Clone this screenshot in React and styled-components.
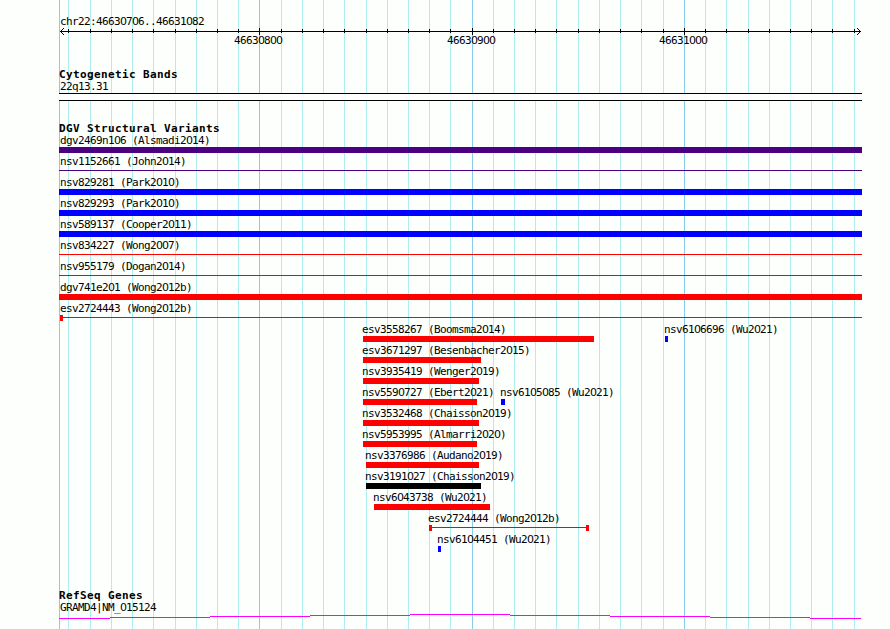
import React from "react";
import styled, { createGlobalStyle } from "styled-components";

const GlobalStyle = createGlobalStyle`
  body {
    margin: 0;
    background: #fdfffc;
  }
`;

const LEFT = 59;
const minorLines = [
  68, 90, 111, 132, 153, 175, 196, 217, 238, 281, 302, 323, 344, 366, 387, 408,
  429, 450, 493, 514, 535, 556, 578, 599, 620, 641, 663, 705, 726, 748, 769,
  790, 811, 832, 854,
];
const majorLines = [259, 472, 684];

const purple = "#4b0082";
const blue = "#0000ff";
const red = "#ff0000";

// start and end are pixels on the panel, "span" is a thin line with end caps
const rows = [
  [{ name: "dgv2469n106 (Alsmadi2014)", start: 59, end: 862, color: purple }],
  [{ name: "nsv1152661 (John2014)", start: 59, end: 862, color: purple, kind: "line" }],
  [{ name: "nsv829281 (Park2010)", start: 59, end: 862, color: blue }],
  [{ name: "nsv829293 (Park2010)", start: 59, end: 862, color: blue }],
  [{ name: "nsv589137 (Cooper2011)", start: 59, end: 862, color: blue }],
  [{ name: "nsv834227 (Wong2007)", start: 59, end: 862, color: red, kind: "line" }],
  [{ name: "nsv955179 (Dogan2014)", start: 59, end: 862, color: red, kind: "line" }],
  [{ name: "dgv741e201 (Wong2012b)", start: 59, end: 862, color: red }],
  [{ name: "esv2724443 (Wong2012b)", start: 60, end: 862, color: red, kind: "open" }],
  [
    { name: "esv3558267 (Boomsma2014)", start: 363, end: 594, color: red },
    { name: "nsv6106696 (Wu2021)", start: 665, end: 668, color: blue },
  ],
  [{ name: "esv3671297 (Besenbacher2015)", start: 363, end: 481, color: red }],
  [{ name: "nsv3935419 (Wenger2019)", start: 363, end: 479, color: red }],
  [
    { name: "nsv5590727 (Ebert2021)", start: 363, end: 477, color: red },
    { name: "nsv6105085 (Wu2021)", start: 501, end: 505, color: blue },
  ],
  [{ name: "nsv3532468 (Chaisson2019)", start: 363, end: 479, color: red }],
  [{ name: "nsv5953995 (Almarri2020)", start: 363, end: 477, color: red }],
  [{ name: "nsv3376986 (Audano2019)", start: 366, end: 479, color: red }],
  [{ name: "nsv3191027 (Chaisson2019)", start: 366, end: 481, color: "#000000" }],
  [{ name: "nsv6043738 (Wu2021)", start: 374, end: 490, color: red }],
  [{ name: "esv2724444 (Wong2012b)", start: 429, end: 589, color: red, kind: "span" }],
  [{ name: "nsv6104451 (Wu2021)", start: 438, end: 441, color: blue }],
];

// the zero of the mono font is dotted, the plain one comes from the sans face
function Plain({ children }) {
  return children
    .split(/(0)/)
    .map((part, i) => (part === "0" ? <Zero key={i}>0</Zero> : part));
}

function Grid() {
  return (
    <GridLayer width="890" height="629" shapeRendering="crispEdges">
      {minorLines.map((x) => (
        <rect key={x} x={x} y="0" width="1" height="629" fill="#afeeee" />
      ))}
      {[LEFT, ...majorLines].map((x) => (
        <rect key={x} x={x} y="0" width="1" height="629" fill="#87ceeb" />
      ))}
    </GridLayer>
  );
}

function Ruler() {
  return (
    <RulerBox>
      <RegionLabel>
        <Plain>chr22:46630706..46631082</Plain>
      </RegionLabel>
      <Axis width="803" height="8" viewBox="59 27 803 8" shapeRendering="crispEdges">
        <rect x="60" y="31" width="801" height="1" />
        {minorLines.map((x) => (
          <rect key={x} x={x} y="29" width="1" height="4" />
        ))}
        {majorLines.map((x) => (
          <rect key={x} x={x} y="28" width="1" height="7" />
        ))}
        <path d="M61 30h1v1h-1zM62 29h1v1h-1zM63 28h1v1h-1zM61 32h1v1h-1zM62 33h1v1h-1zM63 34h1v1h-1z" />
        <path d="M859 30h1v1h-1zM858 29h1v1h-1zM857 28h1v1h-1zM859 32h1v1h-1zM858 33h1v1h-1zM857 34h1v1h-1z" />
      </Axis>
      <TickLabels>
        <Tick><Plain>46630800</Plain></Tick>
        <Tick><Plain>46630900</Plain></Tick>
        <Tick><Plain>46631000</Plain></Tick>
      </TickLabels>
    </RulerBox>
  );
}

function Feature({ name, start, end, color, kind, offset }) {
  return (
    <FeatureBox $gap={start - offset}>
      <FeatureName $shift={start <= 60 ? 61 - start : 0}>
        <Plain>{name}</Plain>
      </FeatureName>
      <Glyph $width={end - start} $color={color} $kind={kind}>
        {(kind === "open" || kind === "span") && <Cap $color={color} />}
        {kind === "span" && <Cap $color={color} />}
      </Glyph>
    </FeatureBox>
  );
}

function App() {
  return (
    <Panel>
      <GlobalStyle />
      <Grid />
      <Ruler />
      <Section $height={54}>
        <Title>Cytogenetic Bands</Title>
        <Caption><Plain>22q13.31</Plain></Caption>
        <Band />
      </Section>
      <Section $height={467}>
        <Title>DGV Structural Variants</Title>
        {rows.map((row) => (
          <Row key={row[0].name}>
            {row.map((feature, i) => (
              <Feature
                key={feature.name}
                {...feature}
                offset={i === 0 ? LEFT : row[i - 1].end}
              />
            ))}
          </Row>
        ))}
      </Section>
      <Section $height={41}>
        <Title>RefSeq Genes</Title>
        <Caption><Plain>GRAMD4|NM_015124</Plain></Caption>
        <Gene width="803" height="5" viewBox="59 614 803 5" shapeRendering="crispEdges">
          <path d="M59 618h51v1h-51zM110 617h100v1h-100zM210 616h100v1h-100zM310 615h100v1h-100zM410 614h100v1h-100zM510 615h100v1h-100zM610 616h100v1h-100zM710 617h100v1h-100zM810 618h51v1h-51z" />
        </Gene>
      </Section>
    </Panel>
  );
}

export default App;

const Panel = styled.div`
  position: relative;
  box-sizing: border-box;
  width: 890px;
  height: 629px;
  padding: 14px 28px 0 59px;
  overflow: hidden;
  color: #000;
  font-family: "DejaVu Sans Mono", monospace;
  font-size: 11px;
  letter-spacing: -0.623px;
  line-height: 12px;
  white-space: pre;
`;
const GridLayer = styled.svg`
  position: absolute;
  top: 0;
  left: 0;
  z-index: -1;
`;
const Zero = styled.span`
  font-family: "DejaVu Sans", sans-serif;
  letter-spacing: -1px;
`;
const RulerBox = styled.div`
  display: flex;
  flex-direction: column;
  height: 52px;
`;
const RegionLabel = styled.div`
  height: 13px;
  padding: 2px 0 0 1px;
  box-sizing: border-box;
`;
const Axis = styled.svg`
  display: block;
  flex-shrink: 0;
`;
const TickLabels = styled.div`
  display: flex;
  gap: 165px;
  padding-left: 175px;
  line-height: 11px;
`;
const Tick = styled.span`
  width: 48px;
  flex-shrink: 0;

  &:last-child {
    margin-left: -1px;
  }
`;
const Section = styled.section`
  display: flex;
  flex-direction: column;
  height: ${(props) => props.$height}px;
`;
const Title = styled.h2`
  flex-shrink: 0;
  height: 12px;
  margin: 0;
  padding-top: 3px;
  box-sizing: border-box;
  font-size: 11px;
  font-weight: bold;
  line-height: 12px;
  letter-spacing: 0.377px;
`;
const Caption = styled.div`
  height: 14px;
  padding: 3px 0 0 1px;
  box-sizing: border-box;
  flex-shrink: 0;
`;
const Band = styled.div`
  height: 8px;
  margin-top: 1px;
  box-sizing: border-box;
  border: solid #000;
  border-width: 1px 0;
  background: #fff;
`;
const Row = styled.div`
  display: flex;
  flex-shrink: 0;
  height: 21px;
`;
const FeatureBox = styled.div`
  width: min-content;
  flex-shrink: 0;
  margin-left: ${(props) => props.$gap}px;
`;
const FeatureName = styled.div`
  /* labels may run past a short glyph without pushing the next feature */
  width: 0;
  height: 15px;
  padding-top: 3px;
  box-sizing: border-box;
  margin-left: ${(props) => props.$shift - 1}px;
`;
const Glyph = styled.div`
  display: flex;
  justify-content: space-between;
  width: ${(props) => props.$width}px;
  height: 6px;
  background: ${(props) =>
    props.$kind
      ? `linear-gradient(${props.$color}, ${props.$color}) 0 2px / 100% 1px no-repeat`
      : props.$color};
`;
const Cap = styled.i`
  width: 3px;
  height: 6px;
  background: ${(props) => props.$color};
`;
const Gene = styled.svg`
  display: block;
  margin-top: 1px;
  fill: #ff00ff;
`;
